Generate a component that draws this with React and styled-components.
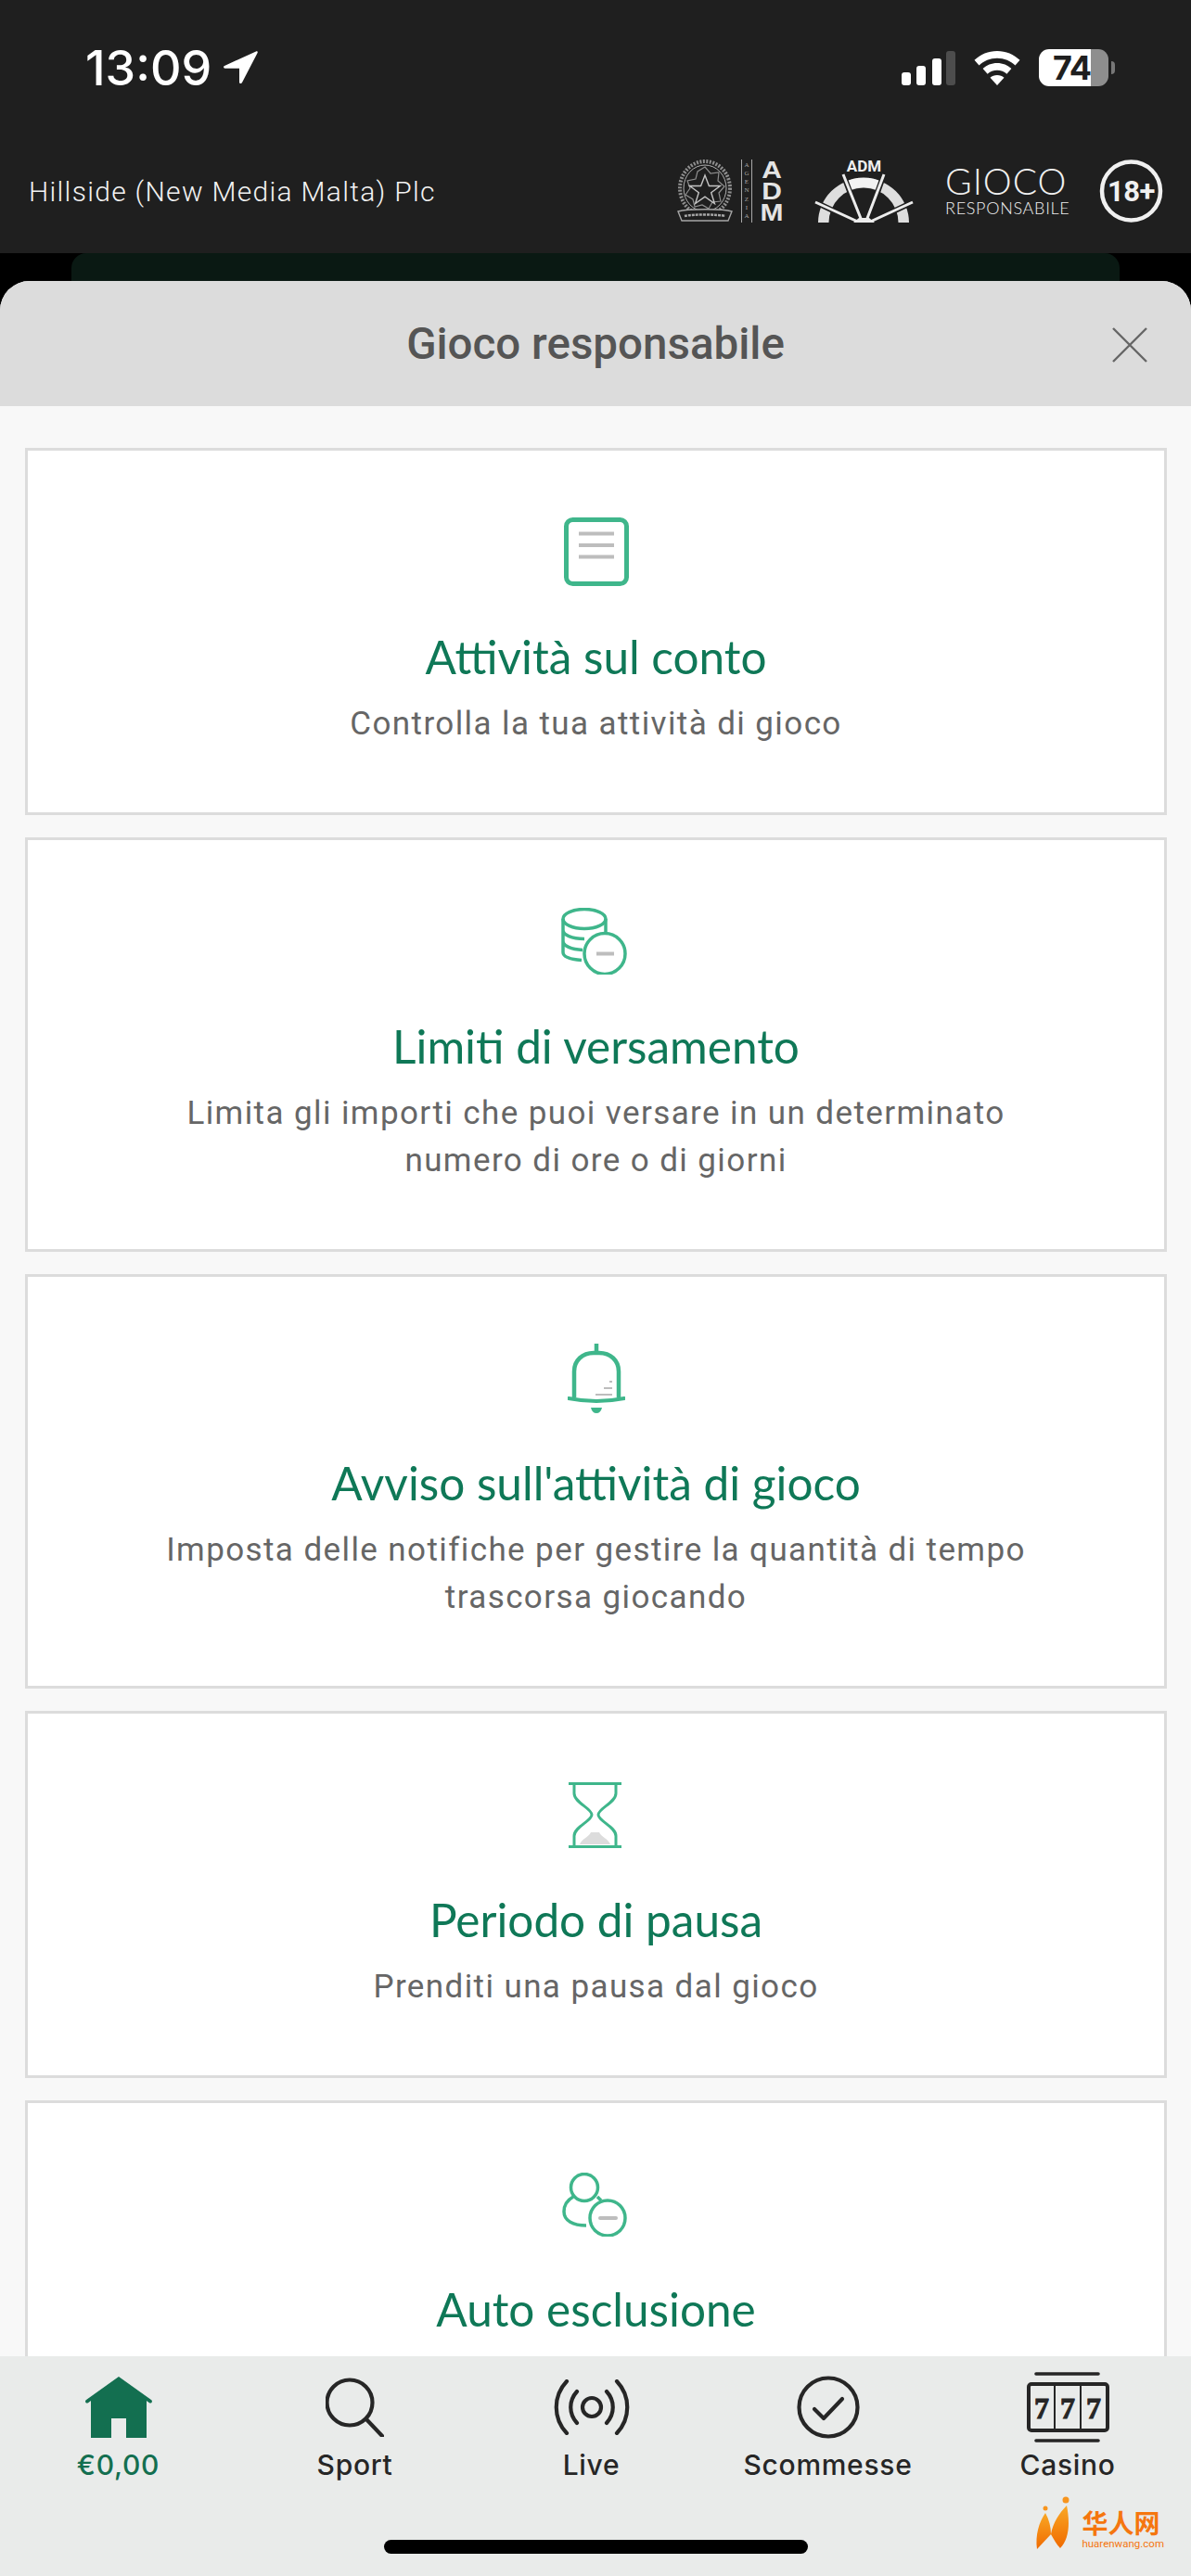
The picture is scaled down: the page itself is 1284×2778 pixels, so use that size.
import styled, { createGlobalStyle } from "styled-components";

const GlobalStyle = createGlobalStyle`
  html, body {
    margin: 0;
    padding: 0;
    background: #000;
  }
  * {
    box-sizing: border-box;
  }
`;

const Page = styled.div`
  width: 1284px;
  height: 2778px;
  display: flex;
  flex-direction: column;
  overflow: hidden;
  position: relative;
  font-family: "Inter", "Liberation Sans", sans-serif;
`;

const TopBar = styled.header`
  height: 273px;
  background: #1f1f1f;
  color: #fff;
  flex-shrink: 0;
`;

const StatusRow = styled.div`
  height: 146px;
  display: flex;
  align-items: center;
  justify-content: space-between;
  padding: 0 82px 0 92px;
`;

const Clock = styled.div`
  display: flex;
  align-items: center;
  gap: 12px;
  font-size: 52px;
  font-weight: 500;
`;

const StatusIcons = styled.div`
  display: flex;
  align-items: center;
  gap: 20px;
`;

const Battery = styled.div`
  position: relative;
  width: 75px;
  height: 40px;
  margin-right: 7px;
  border-radius: 11px;
  background: linear-gradient(90deg, #fff 0, #fff 56px, #8e8e8e 56px);
  color: #1f1f1f;
  font-size: 36px;
  font-weight: 700;
  line-height: 40px;
  text-align: center;
  padding-right: 4px;
  letter-spacing: -1px;
  &::after {
    content: "";
    position: absolute;
    right: -7px;
    top: 13px;
    width: 4px;
    height: 14px;
    border-radius: 0 4px 4px 0;
    background: #777;
  }
`;

const LicenseRow = styled.div`
  height: 120px;
  display: flex;
  align-items: center;
  justify-content: space-between;
  padding: 0 30px 0 31px;
`;

const Company = styled.div`
  font-family: "Roboto", sans-serif;
  font-size: 30px;
  font-weight: 300;
  letter-spacing: 1.3px;
  color: #f2f2f2;
`;

const Logos = styled.div`
  display: flex;
  align-items: center;
  gap: 34px;
`;

const RegistryLogo = styled.div`
  display: flex;
  align-items: stretch;
  height: 68px;
`;

const AgencyColumn = styled.div`
  width: 12px;
  margin-left: 9px;
  border-left: 1px solid #a8a8a8;
  border-right: 1px solid #a8a8a8;
  display: flex;
  flex-direction: column;
  align-items: center;
  justify-content: space-between;
  padding: 2px 0;
  font-family: "Liberation Serif", serif;
  font-size: 7px;
  line-height: 9px;
  color: #a8a8a8;
`;

const AdmColumn = styled.div`
  width: 24px;
  margin-left: 9px;
  display: flex;
  flex-direction: column;
  align-items: center;
  font-family: "Liberation Sans", sans-serif;
  font-size: 25px;
  font-weight: 700;
  line-height: 23px;
  color: #e4e4e4;
  transform: scaleX(1.2);
`;

const WheelLogo = styled.div`
  width: 107px;
  height: 68px;
  display: flex;
  flex-direction: column;
  align-items: center;
`;

const WheelLabel = styled.span`
  height: 15px;
  font-family: "Roboto", sans-serif;
  font-size: 17px;
  font-weight: 700;
  line-height: 15px;
  color: #efefef;
`;

const GiocoLogo = styled.div`
  width: 132px;
  height: 58px;
  display: flex;
  flex-direction: column;
  font-family: "Lato", sans-serif;
  font-weight: 300;
  color: #f0f0f0;
  white-space: nowrap;
`;

const GiocoWord = styled.span`
  font-size: 39px;
  line-height: 36px;
  letter-spacing: 1px;
`;

const GiocoSub = styled.span`
  font-size: 18px;
  line-height: 22px;
  letter-spacing: 0.7px;
`;

const Backdrop = styled.div`
  height: 30px;
  flex-shrink: 0;
  background: #000;
  padding: 0 77px;
`;

const PeekCard = styled.div`
  height: 100%;
  background: #0a1913;
  border-radius: 16px 16px 0 0;
`;

const Sheet = styled.section`
  flex: 1;
  min-height: 0;
  display: flex;
  flex-direction: column;
  background: #f8f8f8;
  border-radius: 32px 32px 0 0;
  overflow: hidden;
`;

const SheetHeader = styled.div`
  height: 135px;
  flex-shrink: 0;
  display: flex;
  align-items: center;
  justify-content: center;
  position: relative;
  background: #dcdcdc;
`;

const SheetTitle = styled.h1`
  margin: 0;
  font-family: "Roboto", sans-serif;
  font-size: 47.5px;
  font-weight: 500;
  color: #555;
`;

const CloseButton = styled.button`
  position: absolute;
  right: 47px;
  top: 50px;
  width: 38px;
  height: 38px;
  padding: 0;
  border: 0;
  background: none;
  display: flex;
`;

const CardList = styled.div`
  flex: 1;
  min-height: 0;
  overflow: hidden;
  display: flex;
  flex-direction: column;
  gap: 24px;
  padding: 45px 26px 0 27px;
`;

const Card = styled.article`
  flex-shrink: 0;
  background: #fff;
  border: 3px solid #dcdcdc;
  padding: 72px 40px 70px;
  display: flex;
  flex-direction: column;
  align-items: center;
  text-align: center;
`;

const IconSlot = styled.div`
  height: 74px;
  display: flex;
  align-items: center;
  justify-content: center;
`;

const CardTitle = styled.h2`
  margin: 44px 0 0;
  font-family: "Lato", sans-serif;
  font-size: 49.5px;
  font-weight: 400;
  line-height: 64px;
  color: #0f7857;
`;

const CardText = styled.p`
  margin: 15px 0 0;
  max-width: 960px;
  font-family: "Roboto", sans-serif;
  font-size: 35px;
  line-height: 51px;
  letter-spacing: 1.4px;
  color: #666;
`;

const TabBar = styled.nav`
  height: 237px;
  flex-shrink: 0;
  background: #e9ebea;
  display: grid;
  grid-template-columns: repeat(5, 255px);
  padding-top: 17px;
`;

const Tab = styled.div`
  display: flex;
  flex-direction: column;
  align-items: center;
  margin-left: ${(p) => p.$shift || 0}px;
`;

const TabIcon = styled.div`
  height: 76px;
  display: flex;
  align-items: center;
  justify-content: center;
`;

const TabLabel = styled.span`
  margin-top: 2px;
  font-family: "Inter", sans-serif;
  font-size: 30px;
  font-weight: 500;
  line-height: 44px;
  letter-spacing: 0.7px;
  color: ${(p) => (p.$active ? "#136f50" : "#262626")};
`;

const HomeBar = styled.div`
  position: absolute;
  left: 414px;
  bottom: 24px;
  width: 457px;
  height: 15px;
  border-radius: 8px;
  background: #000;
`;

const Watermark = styled.div`
  position: absolute;
  right: 29px;
  bottom: 28px;
  display: flex;
  align-items: flex-end;
  gap: 10px;
  color: #f5760f;
`;

const WatermarkText = styled.div`
  display: flex;
  flex-direction: column;
`;

const WatermarkName = styled.span`
  font-family: "Noto Sans CJK SC", sans-serif;
  font-size: 28px;
  font-weight: 700;
  line-height: 32px;
`;

const WatermarkUrl = styled.span`
  font-family: "Roboto", sans-serif;
  font-size: 11.5px;
  line-height: 14px;
  white-space: nowrap;
`;

const GREEN = "#3fb68b";
const GRAY = "#bdbdbd";
const DARK = "#262626";

const LocationArrow = () => (
  <svg width="38" height="38" viewBox="0 0 38 38">
    <path d="M36 1.500 2 17c-1.600.8-1 2.800.6 2.800H18v14.600c0 1.800 2.200 2.300 3 .7L37.600 3c.6-1.200-.5-2-1.600-1.500z" fill="#fff" />
  </svg>
);

const Signal = () => (
  <svg width="58" height="37" viewBox="0 0 58 37">
    <rect x="0" y="23" width="10" height="14" rx="3" fill="#fff" />
    <rect x="16" y="16" width="10" height="21" rx="3" fill="#fff" />
    <rect x="33" y="8" width="10" height="29" rx="3" fill="#fff" />
    <rect x="48" y="0" width="10" height="37" rx="3" fill="#4d4d4d" />
  </svg>
);

const Wifi = () => (
  <svg width="50" height="37" viewBox="0 0 50 37">
    <path d="M25 0C15.500 0 7 3.700.5 9.800l5 5.600C10.600 10.600 17.400 7.700 25 7.700s14.400 2.900 19.500 7.700l5-5.600C43 3.700 34.500 0 25 0z" fill="#fff" />
    <path d="M25 13c-6 0-11.400 2.300-15.400 6.100l5 5.600c2.700-2.500 6.400-4 10.400-4s7.700 1.500 10.400 4l5-5.600C36.400 15.300 31 13 25 13z" fill="#fff" />
    <path d="M25 26c-2.900 0-5.500 1-7.500 2.800L25 37l7.500-8.200C30.500 27 27.900 26 25 26z" fill="#fff" />
  </svg>
);

const EmblemMark = () => (
  <svg width="60" height="68" viewBox="0 0 60 68" fill="none">
    <ellipse cx="30" cy="31" rx="27" ry="29" stroke="#8f8f8f" strokeWidth="4" strokeDasharray="2 1.500" />
    <ellipse cx="30" cy="31" rx="23" ry="25" stroke="#b0b0b0" strokeWidth="1" />
    <path d="M30 8l6 7 9-1-1 9 7 6-6 7 2 9-9 1-4 7-7-4-8 2-2-8-8-5 5-7-3-8 9-2 2-8z" stroke="#8d8d8d" strokeWidth="1.200" />
    <path d="M30 17l4.400 11.500h12l-9.700 7.200 3.700 11.800L30 40.200l-10.400 7.300 3.700-11.800-9.700-7.200h12z" stroke="#c4c4c4" strokeWidth="1.400" />
    <path d="M1 56c10-3 48-3 58 0l-4 10H5z" fill="#1f1f1f" stroke="#a6a6a6" strokeWidth="1.400" />
    <path d="M8 61c8-2 36-2 44 0" stroke="#a6a6a6" strokeWidth="2.500" strokeDasharray="3 1" />
  </svg>
);

const WheelMark = () => (
  <svg width="107" height="53" viewBox="0 15 107 53" fill="none">
    <path d="M4 68a49 48 0 0 1 98 0H90.500a37.500 37.500 0 0 0-75 0z" fill="#dedede" />
    <path d="M33 24a49 48 0 0 1 40 0l-3 10a37 37 0 0 0-34 0z" fill="#f2f2f2" />
    <path d="M31 16l19 50M75 16L57 66M1 46l46 22M106 46L60 68" stroke="#1f1f1f" strokeWidth="6" />
    <path d="M31 16l20 50M75 16L56 66M1 46l48 22M106 46L58 68" stroke="#ececec" strokeWidth="3" />
    <path d="M42 68l6-5h11l6 5z" fill="#ececec" />
  </svg>
);

const AgeMark = () => (
  <svg width="69" height="68" viewBox="0 0 69 68" fill="none">
    <circle cx="34.500" cy="34" r="31.500" stroke="#f0f0f0" strokeWidth="4.500" />
    <text x="34.500" y="45" fontFamily="Roboto" fontWeight="700" fontSize="31" fill="#f0f0f0" textAnchor="middle" letterSpacing="-0.5">18+</text>
  </svg>
);

const CloseIcon = () => (
  <svg width="38" height="38" viewBox="0 0 38 38">
    <path d="M1 1l36 36M37 1L1 37" stroke="#666" strokeWidth="2.400" />
  </svg>
);

const DocIcon = () => (
  <svg width="70" height="74" viewBox="0 0 70 74" fill="none">
    <rect x="2.500" y="2.500" width="65" height="69" rx="7" stroke={GREEN} strokeWidth="5" />
    <path d="M16 17.500h38M16 30h38M16 42.500h38" stroke={GRAY} strokeWidth="4.200" />
  </svg>
);

const CoinsIcon = () => (
  <svg width="75" height="72" viewBox="0 0 75 72" fill="none" stroke={GREEN} strokeWidth="3.500">
    <ellipse cx="25" cy="12" rx="23" ry="10.500" />
    <path d="M2 12v36c0 4.500 7 7.500 20 8.500M48 12v15M2 24c0 5 9 9.500 23 9.500M2 36c0 5 9 9 21 9.500" />
    <circle cx="47" cy="49.500" r="22" fill="#fff" />
    <path d="M38 49.500h19" stroke={GRAY} strokeWidth="4" />
  </svg>
);

const BellIcon = () => (
  <svg width="62" height="75" viewBox="0 0 62 75" fill="none">
    <path d="M31 0v10M7 58V30C7 18 16 10 28 10h6c12 0 21 8 21 20v28" stroke={GREEN} strokeWidth="4.500" />
    <path d="M1 59c20 4 40 4 60 0" stroke={GREEN} strokeWidth="4" strokeLinecap="round" />
    <path d="M25 69h12c-1 4-3 6-6 6s-5-2-6-6z" fill={GREEN} />
    <path d="M30 55h18M39 48h9M45 41h3" stroke={GRAY} strokeWidth="1.800" />
  </svg>
);

const HourglassIcon = () => (
  <svg width="60" height="71" viewBox="0 0 60 71" fill="none">
    <path d="M12 67c2-6 10-8 12-13h9c2 5 10 7 12 13z" fill="#dcdcdc" />
    <path d="M0 1.500h57M0 69.500h57" stroke={GREEN} strokeWidth="3" />
    <path d="M6 3v9c0 10 19 16 19 23S6 48 6 58v10M51 3v9c0 10-19 16-19 23s19 13 19 23v10" stroke={GREEN} strokeWidth="3" />
  </svg>
);

const UserMinusIcon = () => (
  <svg width="74" height="69" viewBox="0 0 74 69" fill="none" stroke={GREEN} strokeWidth="3.500">
    <circle cx="24" cy="16" r="14.500" />
    <path d="M12 26C5 30 2 36 2 42c0 10 10 15 24 15M38 26l4 4" />
    <circle cx="49" cy="49" r="19" fill="#fff" />
    <path d="M41 49h17" stroke={GRAY} strokeWidth="4" strokeLinecap="round" />
  </svg>
);

const HomeIcon = () => (
  <svg width="74" height="66" viewBox="0 0 74 66">
    <path fillRule="evenodd" d="M37 0l35 25c2 1.500.5 4.500-2 3.300L67 26v40H45V45H29v21H7V26l-3 2.300C1.500 29.500 0 26.500 2 25z" fill="#136f50" />
  </svg>
);

const SearchIcon = () => (
  <svg width="63" height="64" viewBox="0 0 63 64" fill="none" stroke={DARK} strokeWidth="4.200" strokeLinecap="round">
    <circle cx="26" cy="27" r="24.500" />
    <path d="M44 45l17 18" />
  </svg>
);

const LiveIcon = () => (
  <svg width="82" height="60" viewBox="0 0 82 60" fill="none" stroke={DARK} strokeWidth="4.200" strokeLinecap="round">
    <circle cx="41" cy="30" r="10" />
    <path d="M14 2C-1 18-1 42 14 58M25 13c-9 10-9 24 0 34M68 2c15 16 15 40 0 56M57 13c9 10 9 24 0 34" />
  </svg>
);

const CheckCircleIcon = () => (
  <svg width="68" height="68" viewBox="0 0 68 68" fill="none" stroke={DARK} strokeWidth="4.200" strokeLinecap="round" strokeLinejoin="round">
    <circle cx="34" cy="34" r="31.500" />
    <path d="M19 36l10 10 20-21" />
  </svg>
);

const SlotIcon = () => (
  <svg width="89" height="76" viewBox="0 0 89 76" fill="none" stroke={DARK}>
    <path d="M10 2h67M10 74h67" strokeWidth="3.600" strokeLinecap="round" />
    <rect x="2" y="13" width="85" height="50" rx="3" strokeWidth="4" />
    <path d="M30 13v50M58 13v50" strokeWidth="2" />
    {[16, 44, 72].map((x) => (
      <text key={x} x={x} y="50" fontFamily="Liberation Serif" fontWeight="700" fontSize="32" fill={DARK} stroke={DARK} strokeWidth="1" textAnchor="middle">7</text>
    ))}
  </svg>
);

const WatermarkLogo = () => (
  <svg width="40" height="58" viewBox="0 0 40 58">
    <defs>
      <linearGradient id="petal" x1="0" y1="0" x2="0" y2="1">
        <stop offset="0" stopColor="#f9a825" />
        <stop offset="1" stopColor="#f06a00" />
      </linearGradient>
    </defs>
    <circle cx="11" cy="13" r="2.500" fill="#f7941d" />
    <circle cx="33" cy="4" r="3.500" fill="#f7941d" />
    <path d="M11 18C4 28 0 42 2 57c5-5 10-11 15-16 0-8-2-16-6-23z" fill="url(#petal)" />
    <path d="M34 10c-8 8-15 19-17 31 3 5 6 11 10 15 6-6 9-16 9-27 0-7-1-14-2-19z" fill="url(#petal)" />
  </svg>
);

const cards = [
  { title: "Attività sul conto", text: "Controlla la tua attività di gioco", Icon: DocIcon },
  { title: "Limiti di versamento", text: "Limita gli importi che puoi versare in un determinato numero di ore o di giorni", Icon: CoinsIcon },
  { title: "Avviso sull'attività di gioco", text: "Imposta delle notifiche per gestire la quantità di tempo trascorsa giocando", Icon: BellIcon },
  { title: "Periodo di pausa", text: "Prenditi una pausa dal gioco", Icon: HourglassIcon },
  { title: "Auto esclusione", Icon: UserMinusIcon },
];

const tabs = [
  { label: "€0,00", Icon: HomeIcon, active: true },
  { label: "Sport", Icon: SearchIcon },
  { label: "Live", Icon: LiveIcon },
  { label: "Scommesse", Icon: CheckCircleIcon },
  { label: "Casino", Icon: SlotIcon, shift: 7 },
];

const App = () => {
  return (
    <Page>
      <GlobalStyle />
      <TopBar>
        <StatusRow>
          <Clock>
            13:09
            <LocationArrow />
          </Clock>
          <StatusIcons>
            <Signal />
            <Wifi />
            <Battery>74</Battery>
          </StatusIcons>
        </StatusRow>
        <LicenseRow>
          <Company>Hillside (New Media Malta) Plc</Company>
          <Logos>
            <RegistryLogo>
              <EmblemMark />
              <AgencyColumn>
                {"AGENZIA".split("").map((letter, i) => (
                  <span key={i}>{letter}</span>
                ))}
              </AgencyColumn>
              <AdmColumn>
                <span>A</span>
                <span>D</span>
                <span>M</span>
              </AdmColumn>
            </RegistryLogo>
            <WheelLogo>
              <WheelLabel>ADM</WheelLabel>
              <WheelMark />
            </WheelLogo>
            <GiocoLogo>
              <GiocoWord>GIOCO</GiocoWord>
              <GiocoSub>RESPONSABILE</GiocoSub>
            </GiocoLogo>
            <AgeMark />
          </Logos>
        </LicenseRow>
      </TopBar>
      <Backdrop>
        <PeekCard />
      </Backdrop>
      <Sheet>
        <SheetHeader>
          <SheetTitle>Gioco responsabile</SheetTitle>
          <CloseButton aria-label="Chiudi">
            <CloseIcon />
          </CloseButton>
        </SheetHeader>
        <CardList>
          {cards.map(({ title, text, Icon }) => (
            <Card key={title}>
              <IconSlot>
                <Icon />
              </IconSlot>
              <CardTitle>{title}</CardTitle>
              {text && <CardText>{text}</CardText>}
            </Card>
          ))}
        </CardList>
        <TabBar>
          {tabs.map(({ label, Icon, active, shift }) => (
            <Tab key={label} $shift={shift}>
              <TabIcon>
                <Icon />
              </TabIcon>
              <TabLabel $active={active}>{label}</TabLabel>
            </Tab>
          ))}
        </TabBar>
      </Sheet>
      <HomeBar />
      <Watermark>
        <WatermarkLogo />
        <WatermarkText>
          <WatermarkName>华人网</WatermarkName>
          <WatermarkUrl>huarenwang.com</WatermarkUrl>
        </WatermarkText>
      </Watermark>
    </Page>
  );
};

export default App;
